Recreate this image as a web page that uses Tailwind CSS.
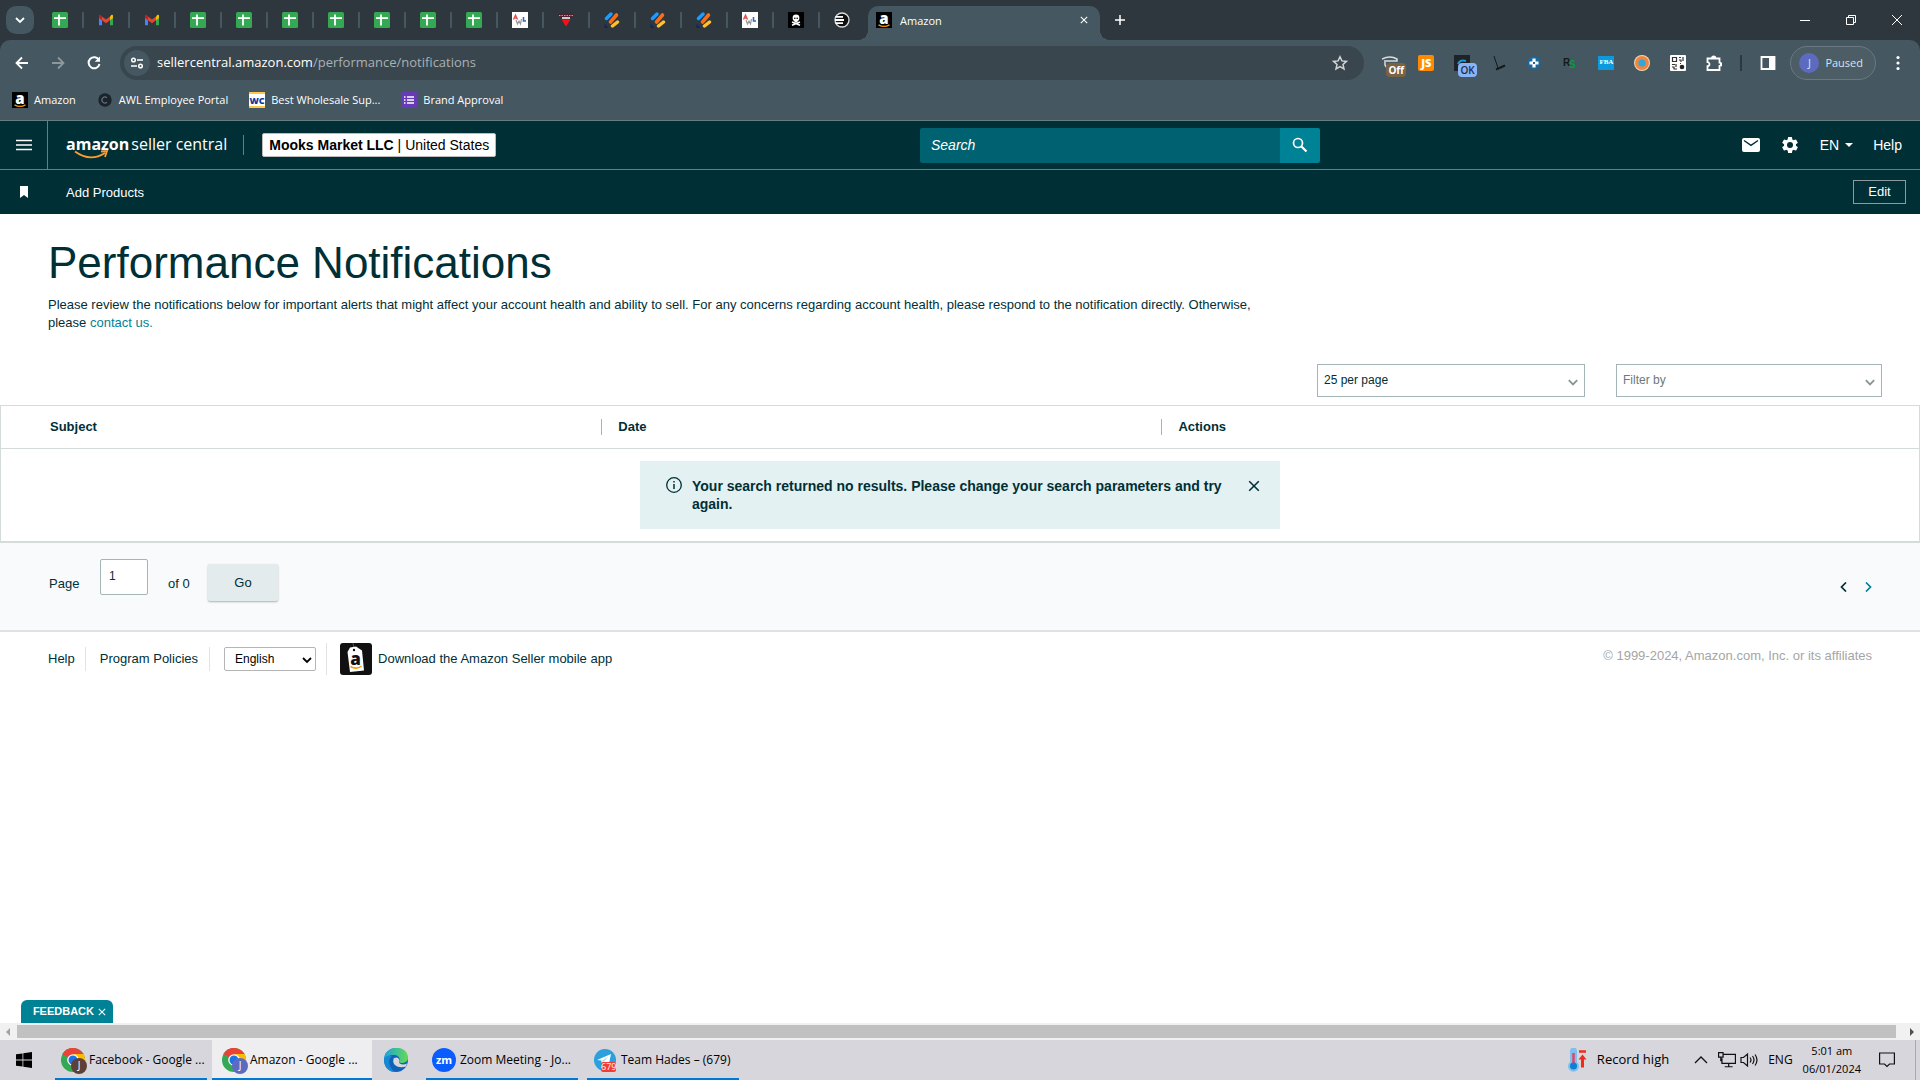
<!DOCTYPE html>
<html lang="en">
<head>
  <meta charset="UTF-8" />
  <meta name="viewport" content="width=device-width, initial-scale=1.0"/>
  <title>Amazon</title>
  <script src="https://cdn.jsdelivr.net/npm/@tailwindcss/browser@4"></script>
</head>
<body class="flex min-h-screen flex-col bg-white font-['Liberation_Sans',Arial,sans-serif] text-[13px] text-[#002f36]">

  <!-- Shared icons -->
  <svg class="hidden">
    <symbol id="sheet" viewBox="0 0 16 16"><rect width="16" height="16" rx="1.5" fill="#34a853"/><path d="M7 2.5v11M2 6.2h12" stroke="#fff" stroke-width="1.8"/></symbol>
    <symbol id="gmail" viewBox="0 0 16 16"><path d="M1 4v9.3h3V7z" fill="#4285f4"/><path d="M15 4v9.3h-3V7z" fill="#34a853"/><path d="M12 4.5L13.3 3C14.2 2.4 15 3 15 4v2L12 8.3z" fill="#fbbc04"/><path d="M4 4.5L2.7 3C1.8 2.4 1 3 1 4v2l3 2.3z" fill="#c5221f"/><path d="M4 8.3V4.4l4 3 4-3v3.9l-4 3z" fill="#ea4335"/></symbol>
    <symbol id="awl" viewBox="0 0 16 16"><rect width="16" height="16" fill="#fff"/><path d="M1.5 7.5L3.5 3l2 4.5M2.3 6h2.5" stroke="#e05252" stroke-width="1.3" fill="none"/><path d="M4 8l1.5 4L7 9l1.5 3L9.5 7" stroke="#999" stroke-width="1.2" fill="none"/><path d="M11.5 5v4H14" stroke="#3666c4" stroke-width="1.6" fill="none"/></symbol>
    <symbol id="stripes" viewBox="0 0 16 16"><path d="M2.5 6.500L7 2" stroke="#1e9bff" stroke-width="3.4" stroke-linecap="round"/><path d="M6.500 10L12.500 3" stroke="#ff6a13" stroke-width="3.6" stroke-linecap="round"/><path d="M8.500 14L13.500 10" stroke="#ffc22e" stroke-width="3.4" stroke-linecap="round"/><path d="M.5 12v4h4z" fill="#14206b"/></symbol>
    <symbol id="amz" viewBox="0 0 16 16"><rect width="16" height="16" fill="#000"/><text x="8" y="11.5" text-anchor="middle" font-family="Open Sans, sans-serif" font-weight="800" font-size="15" fill="#fff">a</text><path d="M2.500 12.800q5.500 3.200 11 0" stroke="#f90" stroke-width="1.4" fill="none"/></symbol>
    <symbol id="chrome" viewBox="0 0 24 24"><circle cx="12" cy="12" r="12" fill="#34a853"/><path d="M12 12L1.600 6A12 12 0 0 1 22.400 6z" fill="#ea4335"/><path d="M12 6h10.400A12 12 0 0 1 12 24l5.200-9z" fill="#fbbc04"/><path d="M1.600 6A12 12 0 0 1 12 0l0 6.500L6.800 9z" fill="#ea4335"/><circle cx="12" cy="12" r="5.8" fill="#fff"/><circle cx="12" cy="12" r="4.5" fill="#1a73e8"/></symbol>
    <symbol id="chev" viewBox="0 0 10 10"><path d="M1 3l4 4 4-4" stroke="currentColor" stroke-width="1.8" fill="none"/></symbol>
    <symbol id="chev-thin" viewBox="0 0 10 10"><path d="M1.500 3.500L5 7l3.500-3.500" stroke="currentColor" stroke-width="1.5" fill="none"/></symbol>
    <symbol id="cross" viewBox="0 0 10 10"><path d="M1 1l8 8M9 1L1 9" stroke="currentColor" stroke-width="1.3" fill="none"/></symbol>
  </svg>

  <!-- Tab strip -->
  <div class="flex h-10 shrink-0 items-center bg-[#2d373d] font-['Open_Sans',sans-serif] text-xs text-white">
    <button aria-label="Search tabs" class="ml-1.5 mr-1 flex h-7 w-7 items-center justify-center rounded-[10px] bg-[#455760]"><svg class="size-2.5"><use href="#chev"/></svg></button>
    <div class="flex">
      <div class="flex h-4 w-[46px] items-center justify-center border-r-2 border-[#455760]"><svg class="size-4"><use href="#sheet"/></svg></div>
      <div class="flex h-4 w-[46px] items-center justify-center border-r-2 border-[#455760]"><svg class="size-4"><use href="#gmail"/></svg></div>
      <div class="flex h-4 w-[46px] items-center justify-center border-r-2 border-[#455760]"><svg class="size-4"><use href="#gmail"/></svg></div>
      <div class="flex h-4 w-[46px] items-center justify-center border-r-2 border-[#455760]"><svg class="size-4"><use href="#sheet"/></svg></div>
      <div class="flex h-4 w-[46px] items-center justify-center border-r-2 border-[#455760]"><svg class="size-4"><use href="#sheet"/></svg></div>
      <div class="flex h-4 w-[46px] items-center justify-center border-r-2 border-[#455760]"><svg class="size-4"><use href="#sheet"/></svg></div>
      <div class="flex h-4 w-[46px] items-center justify-center border-r-2 border-[#455760]"><svg class="size-4"><use href="#sheet"/></svg></div>
      <div class="flex h-4 w-[46px] items-center justify-center border-r-2 border-[#455760]"><svg class="size-4"><use href="#sheet"/></svg></div>
      <div class="flex h-4 w-[46px] items-center justify-center border-r-2 border-[#455760]"><svg class="size-4"><use href="#sheet"/></svg></div>
      <div class="flex h-4 w-[46px] items-center justify-center border-r-2 border-[#455760]"><svg class="size-4"><use href="#sheet"/></svg></div>
      <div class="flex h-4 w-[46px] items-center justify-center border-r-2 border-[#455760]"><svg class="size-4"><use href="#awl"/></svg></div>
      <div class="flex h-4 w-[46px] items-center justify-center border-r-2 border-[#455760]"><svg class="size-4" viewBox="0 0 16 16"><path d="M0 1.500h16l-2 4H2z" fill="#54202d"/><path d="M1 3.500h14" stroke="#e39a3c" stroke-width="1.2" stroke-dasharray="1.500 1"/><path d="M4 6h8" stroke="#fff" stroke-width="1.5"/><path d="M3.500 7.500h9L8 14.500z" fill="#f5101c"/></svg></div>
      <div class="flex h-4 w-[46px] items-center justify-center border-r-2 border-[#455760]"><svg class="size-4"><use href="#stripes"/></svg></div>
      <div class="flex h-4 w-[46px] items-center justify-center border-r-2 border-[#455760]"><svg class="size-4"><use href="#stripes"/></svg></div>
      <div class="flex h-4 w-[46px] items-center justify-center border-r-2 border-[#455760]"><svg class="size-4"><use href="#stripes"/></svg></div>
      <div class="flex h-4 w-[46px] items-center justify-center border-r-2 border-[#455760]"><svg class="size-4"><use href="#awl"/></svg></div>
      <div class="flex h-4 w-[46px] items-center justify-center border-r-2 border-[#455760]"><svg class="size-4" viewBox="0 0 16 16"><rect width="16" height="16" fill="#000"/><path d="M4 10l8 3.200M12 10l-8 3.200" stroke="#fff" stroke-width="1.6"/><circle cx="8" cy="6" r="3.4" fill="#fff"/><path d="M6.500 8h3v2.500h-3z" fill="#fff"/><circle cx="6.800" cy="6.200" r=".8"/><circle cx="9.200" cy="6.200" r=".8"/></svg></div>
      <div class="flex h-4 w-11 items-center justify-center"><svg class="size-4" viewBox="0 0 16 16"><circle cx="8" cy="8" r="7" fill="#111" stroke="#ddd" stroke-width="1.3"/><path d="M1.500 4.800H9M1 8h9M1.500 11.200H9" stroke="#fff" stroke-width="1.8"/></svg></div>
    </div>
    <div class="relative ml-1 mt-1.5 flex h-[34px] w-[232px] items-center rounded-t-[10px] bg-[#455760] px-2">
      <div class="absolute -left-2.5 bottom-0 size-2.5 bg-[radial-gradient(circle_at_0_0,#2d373d_10px,#455760_10px)]"></div>
      <div class="absolute -right-2.5 bottom-0 size-2.5 bg-[radial-gradient(circle_at_100%_0,#2d373d_10px,#455760_10px)]"></div>
      <svg class="mb-1.5 size-4"><use href="#amz"/></svg>
      <span class="mb-1 ml-2 text-[11px]">Amazon</span>
      <button aria-label="Close tab" class="mb-1.5 ml-auto mr-1"><svg class="size-2"><use href="#cross"/></svg></button>
    </div>
    <button aria-label="New tab" class="ml-[15px]"><svg class="size-2.5" viewBox="0 0 10 10"><path d="M5 0v10M0 5h10" stroke="#fff" stroke-width="1.5"/></svg></button>
    <div class="ml-auto flex">
      <button aria-label="Minimize" class="flex w-[46px] justify-center"><svg class="size-2.5" viewBox="0 0 10 10"><path d="M0 5.500h10" stroke="#fff"/></svg></button>
      <button aria-label="Restore" class="flex w-[46px] justify-center"><svg class="size-2.5" viewBox="0 0 10 10" fill="none" stroke="#fff"><path d="M.5 2.500h7v7h-7zM2.500 2.500v-2h7v7h-2"/></svg></button>
      <button aria-label="Close" class="flex w-[46px] justify-center"><svg class="size-2.5" viewBox="0 0 10 10"><path d="M0 0l10 10M10 0L0 10" stroke="#fff"/></svg></button>
    </div>
  </div>

  <!-- Toolbar -->
  <div class="shrink-0 bg-[#2d373d] font-['Open_Sans',sans-serif] text-white">
    <div class="flex h-[46px] items-center rounded-t-[10px] bg-[#455760] px-3.5">
      <button aria-label="Back" class="mr-5"><svg class="size-4" viewBox="0 0 16 16" fill="none" stroke="#fff" stroke-width="1.8"><path d="M14 8H3M8 2.500L2.500 8 8 13.500"/></svg></button>
      <button aria-label="Forward" class="mr-5"><svg class="size-4" viewBox="0 0 16 16" fill="none" stroke="#8d989d" stroke-width="1.8"><path d="M2 8h11M8 2.500L13.500 8 8 13.500"/></svg></button>
      <button aria-label="Reload" class="mr-[18px]"><svg class="size-4" viewBox="0 0 16 16" fill="none" stroke="#fff" stroke-width="2"><path d="M13 5.200A5.500 5.500 0 1 0 13.500 9"/><path d="M14 1.500v5.300H8.700z" fill="#fff" stroke="none"/></svg></button>
      <div class="flex h-[34px] flex-1 items-center rounded-full bg-[#39464d] px-1">
        <button aria-label="View site information" class="flex size-[26px] items-center justify-center rounded-full bg-[#455760]"><svg class="size-3.5" viewBox="0 0 14 14" fill="none" stroke="#fff" stroke-width="1.5"><circle cx="3.500" cy="4" r="1.8"/><path d="M7 4h6M1 10h6"/><circle cx="10.500" cy="10" r="1.8"/></svg></button>
        <div class="ml-[7px] text-[13px]">sellercentral.amazon.com<span class="text-[#a9b1b5]">/performance/notifications</span></div>
        <button aria-label="Bookmark this tab" class="ml-auto mr-3"><svg class="size-4" viewBox="0 0 16 16" fill="none" stroke="#d0d4d6" stroke-width="1.5"><path d="M8 1.800l1.900 4.100 4.500.5-3.400 3 1 4.500L8 11.600l-4 2.300 1-4.500-3.400-3 4.500-.5z"/></svg></button>
      </div>
      <div class="ml-[18px] flex items-center gap-5">
        <div class="relative size-4"><svg class="size-4" viewBox="0 0 16 16" fill="none" stroke="#ddd" stroke-width="1.5"><path d="M0 4q8-4 15 0v2H4M3 5v5l2 3"/></svg><span class="absolute left-1 top-2 rounded-sm bg-[#7a6244] px-0.5 text-[10px] leading-3.5 font-bold">Off</span></div>
        <div class="flex size-4 items-center justify-center rounded-xs bg-[#ff8a00] text-[11px] leading-4 font-extrabold">JS</div>
        <div class="relative size-4 bg-[#1f2226]"><svg class="size-4" viewBox="0 0 16 16"><path d="M4 9q2-5 8-3" stroke="#159bdc" stroke-width="2" fill="none"/></svg><span class="absolute left-1 top-2 rounded-sm bg-[#8ab4f8] px-0.5 text-[10px] leading-3.5 font-semibold text-[#202d42]">OK</span></div>
        <svg class="size-4" viewBox="0 0 16 16" fill="none" stroke="#15191c"><path d="M4 1l4 12" stroke-width="1"/><path d="M6 14.500l9-4" stroke-width="2"/></svg>
        <svg class="size-4" viewBox="0 0 16 16"><circle cx="8" cy="8" r="6.8" fill="#1d6799"/><path d="M8 3.500v9M3.500 8h9" stroke="#fff" stroke-width="3.2"/><rect x="7" y="7" width="2" height="2" fill="#1d6799"/></svg>
        <svg class="size-4" viewBox="0 0 16 16" font-family="Liberation Sans, sans-serif" font-weight="bold"><text x="1" y="11" font-size="10" fill="#15191c">R</text><text x="7" y="13" font-size="10" fill="#0a9a3c">S</text></svg>
        <div class="flex h-3.5 w-4 justify-center bg-[#0b9bdc] font-['Liberation_Serif',serif] text-[7px] leading-3 font-bold">FBA</div>
        <svg class="size-4" viewBox="0 0 16 16"><circle cx="8" cy="8" r="8" fill="#f6d8b8"/><circle cx="8" cy="8" r="5.300" fill="#2ba8e0" stroke="#ef8640" stroke-width="3.4"/></svg>
        <svg class="size-4" viewBox="0 0 16 16"><rect width="16" height="16" rx="1" fill="#fff"/><path d="M2.500 2.500h4v4h-4zM9 2.500h2M13 2v4M9 5h2v2M2 9.500h3M6 9v3M2 12h2v2h3M10 8.500h1" stroke="#333" stroke-width="1.2" fill="none"/><circle cx="12" cy="12" r="2.3" fill="#222"/></svg>
        <svg class="size-4" viewBox="0 0 16 16" fill="none" stroke="#fff" stroke-width="1.8"><path d="M1.500 3.500h12v4.200a1.600 1.600 0 0 1 0 3.200V15h-12v-3.800a2 2 0 0 0 0-4z"/><path d="M6 3a1.700 1.700 0 0 1 3.400 0M14.500 8a1.500 1.500 0 0 1 0 2.800" fill="#fff"/></svg>
      </div>
      <div class="ml-[18px] h-4 w-0.5 bg-[#2d373d]"></div>
      <button aria-label="Side panel" class="ml-[18px]"><svg class="size-4" viewBox="0 0 16 16"><path d="M1.500 2h13v12h-13z" fill="none" stroke="#fff" stroke-width="1.8"/><path d="M9 2h6v12H9z" fill="#fff"/></svg></button>
      <button class="ml-3.5 flex h-[34px] items-center rounded-full border border-[#6a7980] bg-[#4c5d65] pl-2 pr-3 text-[11px] text-[#d3e3f5]"><span class="mr-1.5 flex size-5 items-center justify-center rounded-full bg-[#5c6bc0]">J</span>Paused</button>
      <button aria-label="Menu" class="ml-3.5"><svg class="size-4" viewBox="0 0 16 16" fill="#fff"><circle cx="8" cy="2.500" r="1.6"/><circle cx="8" cy="8" r="1.6"/><circle cx="8" cy="13.500" r="1.6"/></svg></button>
    </div>
    <div class="flex h-[34px] items-start gap-[21px] bg-[#455760] px-3 pt-1.5 text-[11px] leading-4">
      <a href="#" class="flex items-center gap-1.5"><svg class="size-4"><use href="#amz"/></svg>Amazon</a>
      <a href="#" class="flex items-center gap-1.5"><svg class="size-4" viewBox="0 0 16 16"><circle cx="8" cy="8" r="6.7" fill="#1b232b"/><path d="M10 5.800a3 3 0 1 0 0 4.400" stroke="#61707a" stroke-width="1.2" fill="none"/></svg>AWL Employee Portal</a>
      <a href="#" class="flex items-center gap-1.5"><svg class="size-4" viewBox="0 0 16 16"><rect width="16" height="16" fill="#fff"/><path d="M0 1h16M0 15h16" stroke="#fbc84a" stroke-width="2"/><text x="8" y="11.500" text-anchor="middle" font-family="Open Sans, sans-serif" font-weight="800" font-size="9" fill="#16369a">WC</text></svg>Best Wholesale Sup...</a>
      <a href="#" class="flex items-center gap-1.5"><svg class="size-4" viewBox="0 0 16 16"><rect width="16" height="16" rx="1" fill="#673ab7"/><path d="M3 5h1.500M6 5h7M3 8h1.500M6 8h7M3 11h1.500M6 11h7" stroke="#fff" stroke-width="1.6"/></svg>Brand Approval</a>
    </div>
  </div>

  <!-- Seller Central header -->
  <header class="shrink-0 bg-[#002f36] text-white">
    <div class="flex h-[50px] items-center border-y border-[#667f83]">
      <button aria-label="Open menu" class="flex h-full w-12 items-center justify-center border-r border-[#667f83]"><svg class="size-4" viewBox="0 0 16 16"><path d="M0 3.500h16M0 8h16M0 12.500h16" stroke="#fff" stroke-width="1.6"/></svg></button>
      <a href="#" class="relative ml-[18px] flex gap-0.5 pb-0.5 font-['Open_Sans',sans-serif] text-base leading-5 whitespace-nowrap">
        <span class="font-bold">amazon</span><span>seller central</span>
        <svg class="absolute left-2 top-4 h-2.5 w-9" viewBox="0 0 36 10" fill="none" stroke="#ff9d2e" stroke-width="1.8"><path d="M1 1.500q15 11 30 1.500M27 1.500l6-.5-2 6"/></svg>
      </a>
      <div class="ml-4 h-5 w-px bg-[#667f83]"></div>
      <button class="ml-[18px] h-6 rounded-xs border border-[#bbb] bg-white px-1.5 text-sm leading-5 text-black"><b>Mooks Market LLC</b> | United States</button>
      <form class="absolute left-1/2 flex h-[35px] w-[400px] -translate-x-10">
        <input aria-label="Search" placeholder="Search" class="min-w-0 flex-1 rounded-l-xs bg-[#006170] px-[11px] text-sm italic placeholder:text-white"/>
        <button aria-label="Submit search" type="button" class="flex w-10 items-center justify-center rounded-r-xs bg-[#008296]"><svg class="size-4" viewBox="0 0 16 16" fill="none" stroke="#fff"><circle cx="6" cy="6" r="4.500" stroke-width="1.7"/><path d="M9.500 9.500l5 5" stroke-width="2.2"/></svg></button>
      </form>
      <div class="ml-auto flex items-center gap-5 pr-[18px] text-sm">
        <button aria-label="Messages"><svg class="h-4 w-[18px]" viewBox="0 0 18 16"><rect y="1" width="18" height="14" rx="2" fill="#fff"/><path d="M2 3.500l7 4.800 7-4.800" stroke="#002f36" stroke-width="1.5" fill="none"/></svg></button>
        <button aria-label="Settings"><svg class="size-5" viewBox="0 0 24 24" fill="#fff"><path d="M19.140 12.940c.04-.3.060-.61.060-.94s-.02-.64-.07-.94l2.030-1.580a.5.5 0 0 0 .12-.61l-1.920-3.320a.5.5 0 0 0-.59-.22l-2.390.96a7 7 0 0 0-1.620-.94L14.400 2.800a.5.5 0 0 0-.48-.41h-3.840a.5.5 0 0 0-.47.41l-.36 2.550a7 7 0 0 0-1.620.94l-2.390-.96a.5.500 0 0 0-.59.22L2.740 8.870a.5.5 0 0 0 .12.610l2.030 1.580a6 6 0 0 0 0 1.880l-2.030 1.580a.5.5 0 0 0-.12.610l1.920 3.320c.12.220.37.290.59.220l2.390-.96c.5.380 1.030.7 1.620.94l.36 2.540c.05.240.24.410.48.410h3.840c.24 0 .44-.17.47-.41l.36-2.540a7 7 0 0 0 1.620-.94l2.390.96c.22.080.47 0 .59-.22l1.920-3.320a.5.5 0 0 0-.12-.61zM12 15.600a3.600 3.600 0 1 1 0-7.200 3.600 3.600 0 0 1 0 7.200z"/></svg></button>
        <button class="flex items-center gap-1.5">EN<svg class="h-1 w-2" viewBox="0 0 8 4"><path d="M0 0h8L4 4z" fill="#fff"/></svg></button>
        <a href="#">Help</a>
      </div>
    </div>
    <div class="flex h-11 items-center pr-3.5">
      <div class="flex w-12 justify-center"><svg class="h-3 w-2" viewBox="0 0 8 12"><path d="M0 0h8v12L4 9l-4 3z" fill="#fff"/></svg></div>
      <a href="#" class="ml-[18px] pt-0.5">Add Products</a>
      <button class="ml-auto h-6 w-[53px] border border-[#8a9c9f]">Edit</button>
    </div>
  </header>

  <main class="shrink-0">
    <section class="px-12 pt-[25px]">
      <h1 class="text-[44px] leading-12">Performance Notifications</h1>
      <p class="mt-[9px] max-w-[1240px] leading-[18px]">Please review the notifications below for important alerts that might affect your account health and ability to sell. For any concerns regarding account health, please respond to the notification directly. Otherwise, please <a href="#" class="text-[#008296]">contact us.</a></p>
    </section>
    <div class="mt-8 flex justify-end gap-[31px] pr-[38px] text-xs">
      <div class="relative w-[268px]">
        <select aria-label="Results per page" class="h-[33px] w-full appearance-none border border-[#a4b5b7] bg-white px-1.5 pb-0.5"><option>25 per page</option></select>
        <svg class="pointer-events-none absolute right-1.5 top-3 size-3 text-[#879596]"><use href="#chev-thin"/></svg>
      </div>
      <div class="relative w-[266px]">
        <select aria-label="Filter by" class="h-[33px] w-full appearance-none border border-[#a4b5b7] bg-white px-1.5 pb-0.5 text-[#6a7a7d]"><option>Filter by</option></select>
        <svg class="pointer-events-none absolute right-1.5 top-3 size-3 text-[#879596]"><use href="#chev-thin"/></svg>
      </div>
    </div>
    <table class="mt-2 w-full table-fixed border-separate border-spacing-0 border border-b-2 border-[#d5dbdb]">
      <thead>
        <tr class="h-[43px] text-left">
          <th class="w-[31.3%] border-b border-[#d5dbdb] pl-[49px]">Subject</th>
          <th class="w-[29.2%] border-b border-[#d5dbdb]"><div class="border-l border-[#a4b5b7] pl-4 leading-4">Date</div></th>
          <th class="border-b border-[#d5dbdb]"><div class="border-l border-[#a4b5b7] pl-4 leading-4">Actions</div></th>
        </tr>
      </thead>
      <tbody>
        <tr>
          <td colspan="3" class="py-3">
            <div class="mx-auto flex h-[68px] w-[640px] items-start gap-2.5 bg-[#e3f1f2] pl-[26px] pr-5 pt-4 text-sm leading-[18px] font-bold">
              <svg class="size-4 shrink-0" viewBox="0 0 16 16" fill="none" stroke="#002f36"><circle cx="8" cy="8" r="7.300" stroke-width="1.3"/><path d="M8 7v5M8 4v1.500" stroke-width="1.5"/></svg>
              <p class="flex-1">Your search returned no results. Please change your search parameters and try again.</p>
              <button aria-label="Dismiss" class="mt-[3px]"><svg class="size-3"><use href="#cross"/></svg></button>
            </div>
          </td>
        </tr>
      </tbody>
    </table>
    <div class="flex h-[89px] items-start border-b-2 border-[#dde2e5] bg-[#f8fafc] pl-[49px] pr-[47px] pt-4">
      <label for="page" class="mt-[15px] w-[51px]">Page</label>
      <input id="page" value="1" class="h-9 w-12 rounded-xs border border-[#a4b5b7] bg-white px-2 pb-0.5 text-xs"/>
      <span class="ml-5 mt-[15px] w-10">of 0</span>
      <button class="mt-[5px] h-[37px] w-[70px] rounded-xs bg-[#e3ebec] shadow-[0_1px_2px_rgba(0,0,0,0.3)]">Go</button>
      <div class="ml-auto mt-[23px] flex gap-3.5">
        <button aria-label="Previous page"><svg class="size-2.5" viewBox="0 0 10 10" fill="none" stroke="#002f36" stroke-width="1.7"><path d="M7 .5L2.500 5 7 9.500"/></svg></button>
        <button aria-label="Next page"><svg class="size-2.5" viewBox="0 0 10 10" fill="none" stroke="#008296" stroke-width="1.7"><path d="M3 .5L7.500 5 3 9.500"/></svg></button>
      </div>
    </div>
  </main>

  <footer class="flex h-[54px] shrink-0 items-center px-12">
    <a href="#" class="border-r border-[#e0e4e5] py-0.5 pr-2.5">Help</a>
    <a href="#" class="border-r border-[#e0e4e5] py-0.5 pl-3.5 pr-[11px]">Program Policies</a>
    <div class="relative ml-3.5">
      <select aria-label="Language" class="h-6 w-[92px] appearance-none rounded-xs border border-[#b5b5b5] bg-white pl-2.5 text-xs text-black"><option>English</option></select>
      <svg class="pointer-events-none absolute right-1 top-2 size-2.5 text-black"><use href="#chev"/></svg>
    </div>
    <a href="#" class="ml-2.5 flex items-center gap-1.5 border-l border-[#e0e4e5] pl-[13px]">
      <svg class="size-8" viewBox="0 0 32 32"><rect width="32" height="32" rx="3" fill="#111"/><path d="M13 0l1 6" stroke="#555"/><path d="M10 4.500l6-1 6 4 2 20-14 1.500L7.500 9z" fill="#fff"/><circle cx="14" cy="7" r="1.2" fill="#111"/><text x="15.500" y="22" text-anchor="middle" font-family="Open Sans, sans-serif" font-weight="800" font-size="17" fill="#111">a</text><path d="M10.500 23.500q6 3.500 11-.5" stroke="#f90" stroke-width="1.5" fill="none"/></svg>
      Download the Amazon Seller mobile app
    </a>
    <span class="ml-auto pb-1.5 text-[#a5a5a5]">© 1999-2024, Amazon.com, Inc. or its affiliates</span>
  </footer>

  <button class="ml-[21px] mt-auto flex h-[23px] w-[92px] shrink-0 items-center justify-end gap-1 self-start rounded-t-md bg-[#008296] pr-[7px] text-[11px] font-bold text-white">FEEDBACK<svg class="size-2"><use href="#cross"/></svg></button>

  <!-- Horizontal scrollbar -->
  <div class="flex h-[17px] shrink-0 items-center bg-[#f1f1f1]">
    <svg class="h-2 w-[17px]" viewBox="0 0 17 8"><path d="M10 0v8L6 4z" fill="#a3a3a3"/></svg>
    <div class="mr-[7px] h-[13px] flex-1 bg-[#c1c1c1]"></div>
    <svg class="h-2 w-[17px]" viewBox="0 0 17 8"><path d="M7 0v8l4-4z" fill="#505050"/></svg>
  </div>

  <!-- Taskbar -->
  <div class="flex h-10 shrink-0 items-center bg-[#d7d6dc] font-['Open_Sans',sans-serif] text-xs text-black">
    <button aria-label="Start" class="flex w-[55px] pl-4"><svg class="size-4" viewBox="0 0 16 16"><path d="M0 2.300l6.500-.9v6.200H0zM7.300 1.300L16 0v7.600H7.300zM0 8.400h6.500v6.200L0 13.700zM7.300 8.400H16V16l-8.700-1.300z"/></svg></button>
    <button class="flex h-full w-[152px] items-center border-b-2 border-[#0078d7] pl-1.5 pt-0.5 text-left whitespace-nowrap">
      <span class="relative"><svg class="size-6"><use href="#chrome"/></svg><span class="absolute left-2.5 top-2.5 flex size-4 items-center justify-center rounded-full bg-[#5d4037] text-[10px] text-white">J</span></span><span class="ml-1">Facebook - Google ...</span></button>
    <button class="ml-[5px] flex h-full w-40 items-center border-b-2 border-[#0078d7] bg-[#eeedf0] pl-2.5 pt-0.5 text-left whitespace-nowrap">
      <span class="relative"><svg class="size-6"><use href="#chrome"/></svg><span class="absolute left-2.5 top-2.5 flex size-4 items-center justify-center rounded-full bg-[#5c6bc0] text-[10px] text-white">J</span></span><span class="ml-1">Amazon - Google ...</span></button>
    <button aria-label="Microsoft Edge" class="flex w-[54px] pl-3"><svg class="size-6" viewBox="0 0 24 24"><defs><linearGradient id="eg" x1="0" x2="1"><stop offset="0" stop-color="#1ba1e2"/><stop offset="1" stop-color="#62dc4f"/></linearGradient></defs><circle cx="12" cy="12" r="12" fill="#0f62b8"/><path d="M0 12C0-4 24-4 24 10c0 5-7 6-9 4 2-4-1-7-5-7S1 9 0 12z" fill="url(#eg)"/><path d="M0 12c1-4 5-5 8-4-5 4-3 12 3 15.900C4 24 0 18 0 12z" fill="#1788d4"/><path d="M10 10c-3 6 3 11 12 8.500l1-3c-4 2-8 .5-8-1.500 1-1.500 0-4-2-4.500z" fill="#d7d6dc"/></svg></button>
    <button class="flex h-full w-[152px] items-center border-b-2 border-[#0078d7] pl-1.5 pt-0.5 text-left whitespace-nowrap"><span class="flex size-6 items-center justify-center rounded-full bg-[#0b5cff] text-[11px] font-bold text-white">zm</span><span class="ml-1">Zoom Meeting - Jo...</span></button>
    <button class="ml-[9px] flex h-full w-[152px] items-center border-b-2 border-[#0078d7] pl-1.5 pt-0.5 text-left whitespace-nowrap"><span class="relative"><svg class="size-6" viewBox="0 0 24 24"><circle cx="12" cy="12" r="11" fill="#2ba0dc"/><path d="M4 12l14-6-2.500 12-4.500-3.500-2 2-.8-4z" fill="#fff"/><path d="M8.500 13l7-5-4.500 6z" fill="#b7dcf1"/></svg><span class="absolute left-2 top-3.5 rounded-xs bg-[#f23c34] text-[9px] leading-2.5 text-white">679</span></span><span class="ml-1">Team Hades – (679)</span></button>

    <div class="ml-auto flex h-full items-center">
      <svg class="mr-2.5 h-6 w-5" viewBox="0 0 20 24"><path d="M3 3a3.500 3.500 0 0 1 7 0v11a5.500 5.500 0 1 1-7 0z" fill="#7fc0ee"/><path d="M6.500 5v12" stroke="#e2446a" stroke-width="2.5"/><circle cx="6.500" cy="18" r="3.500" fill="#0f7fd0"/><path d="M12 3.500h7" stroke="#f5291a" stroke-width="2.5"/><path d="M15.500 6.500l4 5h-2.500v8h-3v-8h-2.500z" fill="#f5291a"/></svg>
      <span class="mr-[25px] text-[13px]">Record high</span>
      <svg class="mr-2.5 h-2 w-3.5" viewBox="0 0 14 8" fill="none" stroke="#111" stroke-width="1.3"><path d="M1 7l6-6 6 6"/></svg>
      <svg class="mr-1 size-[18px]" viewBox="0 0 16 16" fill="none" stroke="#111" stroke-width="1.1"><path d="M5 3h10.500v8H3.500V6.500M9.500 11v3M6 14h7M.5 1.500h4v4h-4zM2.500 5.500V9"/></svg>
      <svg class="mr-2.5 h-4 w-[18px]" viewBox="0 0 18 16" fill="none" stroke="#111" stroke-width="1.2"><path d="M1 5.500h2.500L7.500 2v12L3.500 10.500H1zM10 5.500q2 2.500 0 5M12.500 4q3 4 0 8M15 2.500q4 5.500 0 11"/></svg>
      <span class="mr-2.5">ENG</span>
      <span class="mr-[18px] text-center text-[11px] leading-[18px]">5:01 am<br/>06/01/2024</span>
      <svg class="mr-5 size-4" viewBox="0 0 16 16" fill="none" stroke="#111" stroke-width="1.2"><path d="M.6 1h14.800v11H10.500L8 14.500 5.500 12H.6z"/></svg>
      <div class="mr-1 h-full w-px bg-[#a8a8ae]"></div>
    </div>
  </div>
</body>
</html>
